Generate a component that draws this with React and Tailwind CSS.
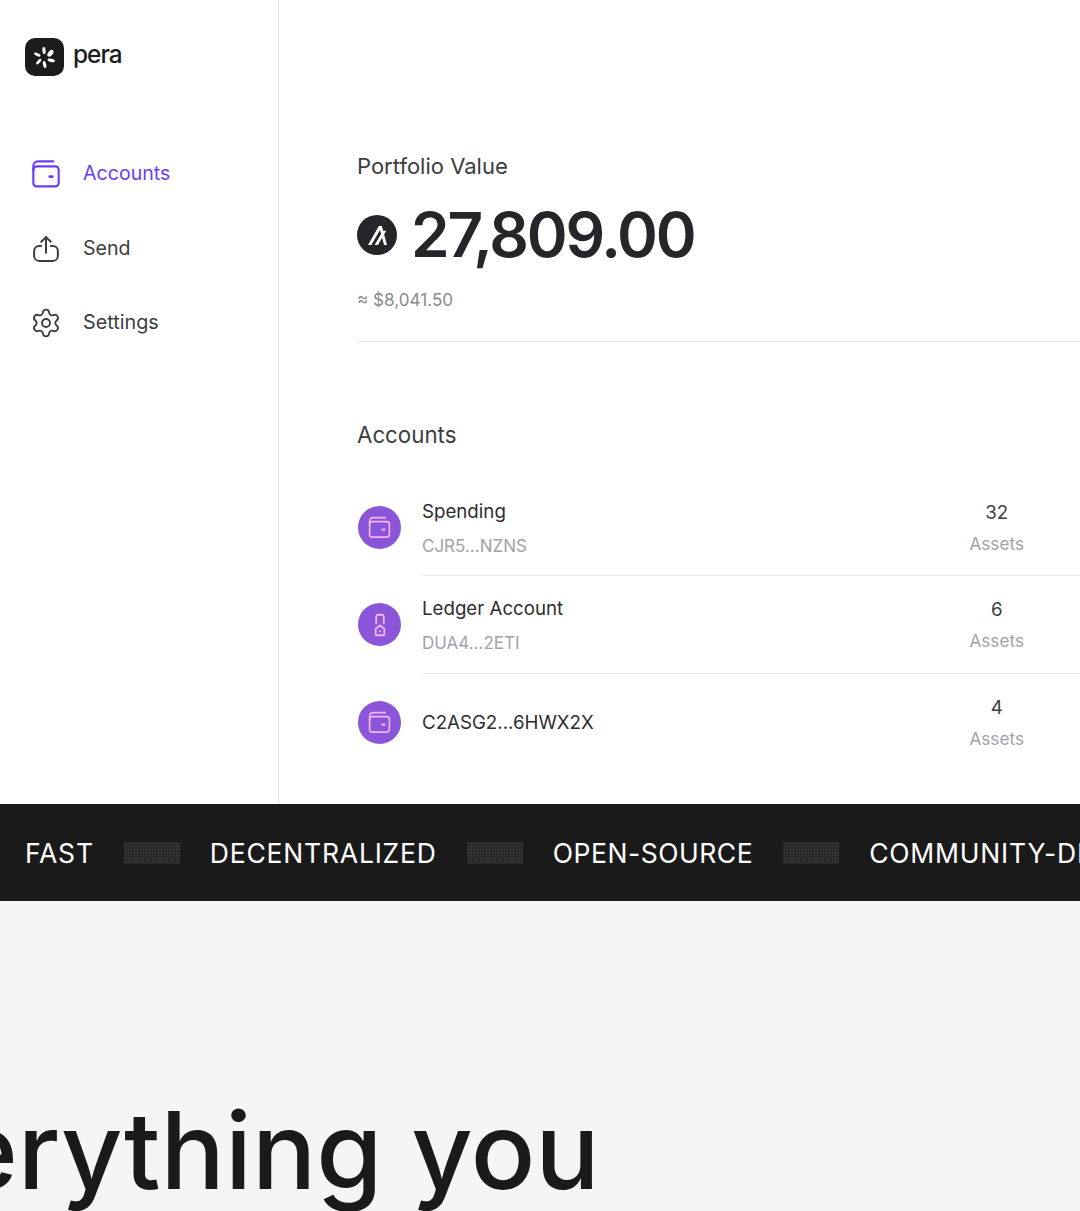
import { Settings } from "lucide-react";

const accounts = [
  { name: "Spending", address: "CJR5...NZNS", assets: 32, icon: "wallet" },
  { name: "Ledger Account", address: "DUA4...2ETI", assets: 6, icon: "ledger" },
  { name: "C2ASG2...6HWX2X", assets: 4, icon: "wallet" },
];

function WalletIcon({ className }) {
  return (
    <svg className={className} viewBox="0 0 24 24" fill="none" stroke="currentColor" strokeWidth="1.6" strokeLinecap="round" strokeLinejoin="round">
      <path d="M2.5 9.5V6C2.5 4 4 2.5 6 2.5H17.5" />
      <path d="M2.5 9C2.5 7.4 3.6 6.3 5.2 6.3H19C20.4 6.3 21.5 7.4 21.5 8.8V18.8C21.5 20.2 20.4 21.3 19 21.3H5C3.6 21.3 2.5 20.2 2.5 18.8V9Z" />
      <path d="M14.8 14H16.8" strokeWidth="2" />
    </svg>
  );
}

function LedgerIcon({ className }) {
  return (
    <svg className={className} viewBox="0 0 24 24" fill="none" stroke="currentColor" strokeWidth="1.7" strokeLinecap="round" strokeLinejoin="round">
      <path d="M8.5 10.5V4.5C8.5 3.4 9.4 2.5 10.5 2.5H13.5C14.6 2.5 15.5 3.4 15.5 4.5V10.5" />
      <path d="M8 15.5L12 12.5L16 15.5V20C16 20.8 15.3 21.5 14.5 21.5H9.5C8.7 21.5 8 20.8 8 20V15.5Z" />
      <path d="M12 17.5V18" />
    </svg>
  );
}

function ShareIcon({ className }) {
  return (
    <svg className={className} viewBox="0 0 24 24" fill="none" stroke="currentColor" strokeWidth="1.6" strokeLinecap="round" strokeLinejoin="round">
      <path d="M8 9.5H6.5C4.3 9.5 2.5 11.3 2.5 13.5V17.5C2.5 19.7 4.3 21.5 6.5 21.5H17.5C19.7 21.5 21.5 19.7 21.5 17.5V13.5C21.5 11.3 19.7 9.5 17.5 9.5H16" />
      <path d="M12 15V2.5" />
      <path d="M8.2 6.2L12 2.5L15.8 6.2" />
    </svg>
  );
}

function AccountRow({ account, last }) {
  return (
    <div className="flex h-[97.3px]">
      <div className="w-16 shrink-0 flex items-center">
        <div className="w-[43px] h-[43px] rounded-full bg-[#8a55d8] flex items-center justify-center text-[#f3b4f0]">
          {account.icon === "wallet" ? <WalletIcon className="w-[25px] h-[25px]" /> : <LedgerIcon className="w-[26px] h-[26px]" />}
        </div>
      </div>
      <div className={`flex-1 flex items-center justify-between pr-[56px] ${last ? "" : "border-b border-[#e9e9ea]"}`}>
        <div className="pt-[2px]">
          <div className="text-[18.7px] leading-[28px] text-[#2c2c30]">{account.name}</div>
          {account.address && <div className="text-[17px] leading-[24px] mt-[8px] text-[#a2a2a8]">{account.address}</div>}
        </div>
        <div className="text-center pt-[1px]">
          <div className="text-[18.7px] leading-[28px] text-[#3c3c40]">{account.assets}</div>
          <div className="text-[17.2px] leading-[24px] mt-[5px] text-[#a2a2a8]">Assets</div>
        </div>
      </div>
    </div>
  );
}

function Dither() {
  return <div className="w-[56px] h-[22px] shrink-0 bg-[#2a2a2a] bg-[radial-gradient(#4a4a4a_0.7px,transparent_0.8px)] bg-[length:3px_3px]" />;
}

export default function App() {
  return (
    <div className="w-[1080px] h-[1211px] overflow-hidden bg-[#f5f5f5] font-['Inter',sans-serif]">
      <div className="flex h-[804px] bg-white">
        {/* sidebar */}
        <aside className="w-[279px] shrink-0 border-r border-[#e8e8ea] pl-[25px]">
          <div className="flex items-center gap-[9px] pt-[38px]">
            <div className="w-[39px] h-[38px] rounded-[10px] bg-[#1c1c1e] flex items-center justify-center">
              <svg className="w-[27px] h-[27px]" viewBox="0 0 27 27" fill="#fff">
                <ellipse cx="13" cy="6.5" rx="1.6" ry="3.6" transform="rotate(-6 13 6.5)" />
                <ellipse cx="19.4" cy="9.3" rx="2.3" ry="3.9" transform="rotate(38 19.4 9.3)" />
                <ellipse cx="20.2" cy="16.4" rx="1.6" ry="3.7" transform="rotate(105 20.2 16.4)" />
                <ellipse cx="13.6" cy="20.6" rx="1.6" ry="3.6" transform="rotate(-12 13.6 20.6)" />
                <ellipse cx="7.7" cy="17.6" rx="1.5" ry="3.5" transform="rotate(40 7.7 17.6)" />
                <ellipse cx="6.3" cy="10.6" rx="1.5" ry="3.5" transform="rotate(-65 6.3 10.6)" />
              </svg>
            </div>
            <span className="text-[24.4px] leading-none font-medium tracking-[-0.04em] text-[#1c1c1e] -mt-[6px]">pera</span>
          </div>
          <nav className="mt-[60px] flex flex-col">
            <a className="flex items-center h-[75px] text-[#6b3df5]">
              <WalletIcon className="w-[32px] h-[32px] ml-[5px]" />
              <span className="ml-[21px] text-[19.6px]">Accounts</span>
            </a>
            <a className="flex items-center h-[75px] text-[#3c3c40]">
              <ShareIcon className="w-[30px] h-[30px] ml-[6px]" />
              <span className="ml-[22px] text-[19.6px]">Send</span>
            </a>
            <a className="flex items-center h-[74px] text-[#3c3c40]">
              <Settings className="w-[32px] h-[32px] ml-[5px]" strokeWidth={1.4} />
              <span className="ml-[21px] text-[19.8px]">Settings</span>
            </a>
          </nav>
        </aside>

        {/* main */}
        <main className="flex-1 pl-[79px] pt-[151px]">
          <h2 className="-ml-[1px] text-[22px] leading-[30px] text-[#3c3c40]">Portfolio Value</h2>
          <div className="flex items-center mt-[19px] h-[70px]">
            <div className="-ml-[1px] w-[40px] h-[40px] rounded-full bg-[#26262a] flex items-center justify-center">
              <svg className="w-[19px] h-[19px]" viewBox="0 0 32 32" fill="#fff">
                <path d="M32 32h-5l-3.25-12.09L16.76 32h-5.59l10.8-18.72-1.74-6.5L5.67 32H0L18.25 0h5.04l2.2 8.17h5.2l-3.55 6.17z" />
              </svg>
            </div>
            <div className="ml-[14px] text-[62px] font-semibold tracking-[-0.035em] leading-none text-[#26262a]">27,809.00</div>
          </div>
          <div className="-ml-[1px] mt-[17px] text-[17.1px] leading-[26px] text-[#8a8a90]">≈ $8,041.50</div>
          <div className="mt-[28px] border-t border-[#dedee0]" />
          <h2 className="-ml-[1px] mt-[78px] text-[22.3px] leading-[30px] text-[#3c3c40]">Accounts</h2>
          <div className="mt-[29px]">
            {accounts.map((account, i) => (
              <AccountRow key={i} account={account} last={i === accounts.length - 1} />
            ))}
          </div>
        </main>
      </div>

      {/* marquee */}
      <div className="h-[97px] bg-[#1a1a1a] flex items-center pl-[25px] gap-[30px] overflow-hidden whitespace-nowrap text-[26.5px] tracking-[0.03em] text-white">
        <span className="mt-[2px]">FAST</span>
        <Dither />
        <span className="mt-[2px]">DECENTRALIZED</span>
        <Dither />
        <span className="mt-[2px] tracking-[0.02em]">OPEN-SOURCE</span>
        <Dither />
        <span className="mt-[2px]">COMMUNITY-DRIVEN</span>
      </div>

      {/* heading */}
      <div className="pt-[185px] whitespace-nowrap">
        <h1 className="-ml-[169px] text-[107px] leading-[1.2] font-medium text-[#1a1a1a]">Everything you</h1>
      </div>
    </div>
  );
}
